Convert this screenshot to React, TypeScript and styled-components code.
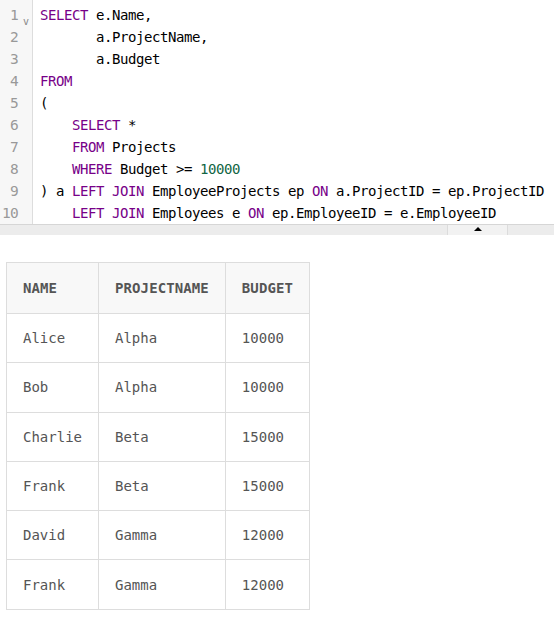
import React from "react";
import styled, { createGlobalStyle } from "styled-components";

const Global = createGlobalStyle`
  html, body { margin: 0; padding: 0; background: #fff; }
  body { font-family: "DejaVu Sans Mono", monospace; }
`;

const Page = styled.div`
  width: 554px;
  display: flex;
  flex-direction: column;
`;

const Editor = styled.div`
  display: flex;
  background: #fff;
`;

const Gutter = styled.div`
  width: 32px;
  flex-shrink: 0;
  background: #f7f7f7;
  border-right: 1px solid #dddddd;
  padding: 4px 0 0;
`;

const LineNo = styled.div`
  position: relative;
  height: 22px;
  line-height: 23px;
  font-family: "DejaVu Sans Mono", monospace;
  font-size: 14.5px;
  letter-spacing: -0.7px;
  color: #999;
  text-align: right;
  padding-right: 14px;
`;

const Fold = styled.span`
  position: absolute;
  left: 23px;
  top: 6px;
  font-size: 10px;
  letter-spacing: 0;
  color: #888;
`;

const Code = styled.div`
  flex: 1;
  padding: 4px 0 0 7px;
  overflow: hidden;
`;

const Line = styled.div`
  height: 22px;
  line-height: 23px;
  font-family: "DejaVu Sans Mono", monospace;
  font-size: 14px;
  letter-spacing: -0.43px;
  color: #000;
  white-space: pre;
`;

const Kw = styled.span`
  color: #770088;
`;

const Num = styled.span`
  color: #116644;
`;

const ResizeBar = styled.div`
  height: 10px;
  background: #ececec;
  border-top: 1px solid #d6d6d6;
  display: flex;
  justify-content: flex-end;
  padding-right: 46px;
`;

const Handle = styled.div`
  width: 59px;
  height: 10px;
  background: #f2f2f2;
  border-left: 1px solid #dcdcdc;
  border-right: 1px solid #dcdcdc;
  display: flex;
  align-items: center;
  justify-content: center;
`;

const Arrow = styled.div`
  width: 0;
  height: 0;
  border-left: 4px solid transparent;
  border-right: 4px solid transparent;
  border-bottom: 4px solid #000;
  margin-top: -2px;
`;

const TableWrap = styled.div`
  padding: 27px 0 0 6px;
`;

const Table = styled.table`
  border-collapse: collapse;
  font-family: "DejaVu Sans Mono", monospace;
`;

const Th = styled.th`
  background: #f8f8f8;
  border: 1px solid #dddddd;
  padding: 0 16px;
  height: 50px;
  text-align: left;
  font-size: 14px;
  font-weight: bold;
  color: #555;
  letter-spacing: 0.1px;
`;

const Td = styled.td`
  border: 1px solid #dddddd;
  padding: 0 16px;
  height: 48.3px;
  font-size: 14px;
  color: #555;
`;

const rows = [
  ["Alice", "Alpha", "10000"],
  ["Bob", "Alpha", "10000"],
  ["Charlie", "Beta", "15000"],
  ["Frank", "Beta", "15000"],
  ["David", "Gamma", "12000"],
  ["Frank", "Gamma", "12000"],
];

export default function App() {
  return (
    <Page>
      <Global />
      <Editor>
        <Gutter>
          {Array.from({ length: 10 }, (_, i) => (
            <LineNo key={i}>
              {i + 1}
              {i === 0 && <Fold>v</Fold>}
            </LineNo>
          ))}
        </Gutter>
        <Code>
          <Line><Kw>SELECT</Kw> e.Name,</Line>
          <Line>{"       a.ProjectName,"}</Line>
          <Line>{"       a.Budget"}</Line>
          <Line><Kw>FROM</Kw></Line>
          <Line>(</Line>
          <Line>{"    "}<Kw>SELECT</Kw> *</Line>
          <Line>{"    "}<Kw>FROM</Kw> Projects</Line>
          <Line>{"    "}<Kw>WHERE</Kw> Budget &gt;= <Num>10000</Num></Line>
          <Line>) a <Kw>LEFT</Kw> <Kw>JOIN</Kw> EmployeeProjects ep <Kw>ON</Kw> a.ProjectID = ep.ProjectID</Line>
          <Line>{"    "}<Kw>LEFT</Kw> <Kw>JOIN</Kw> Employees e <Kw>ON</Kw> ep.EmployeeID = e.EmployeeID</Line>
        </Code>
      </Editor>
      <ResizeBar>
        <Handle>
          <Arrow />
        </Handle>
      </ResizeBar>
      <TableWrap>
        <Table>
          <thead>
            <tr>
              <Th>NAME</Th>
              <Th>PROJECTNAME</Th>
              <Th>BUDGET</Th>
            </tr>
          </thead>
          <tbody>
            {rows.map((r, i) => (
              <tr key={i}>
                {r.map((c, j) => (
                  <Td key={j}>{c}</Td>
                ))}
              </tr>
            ))}
          </tbody>
        </Table>
      </TableWrap>
    </Page>
  );
}
